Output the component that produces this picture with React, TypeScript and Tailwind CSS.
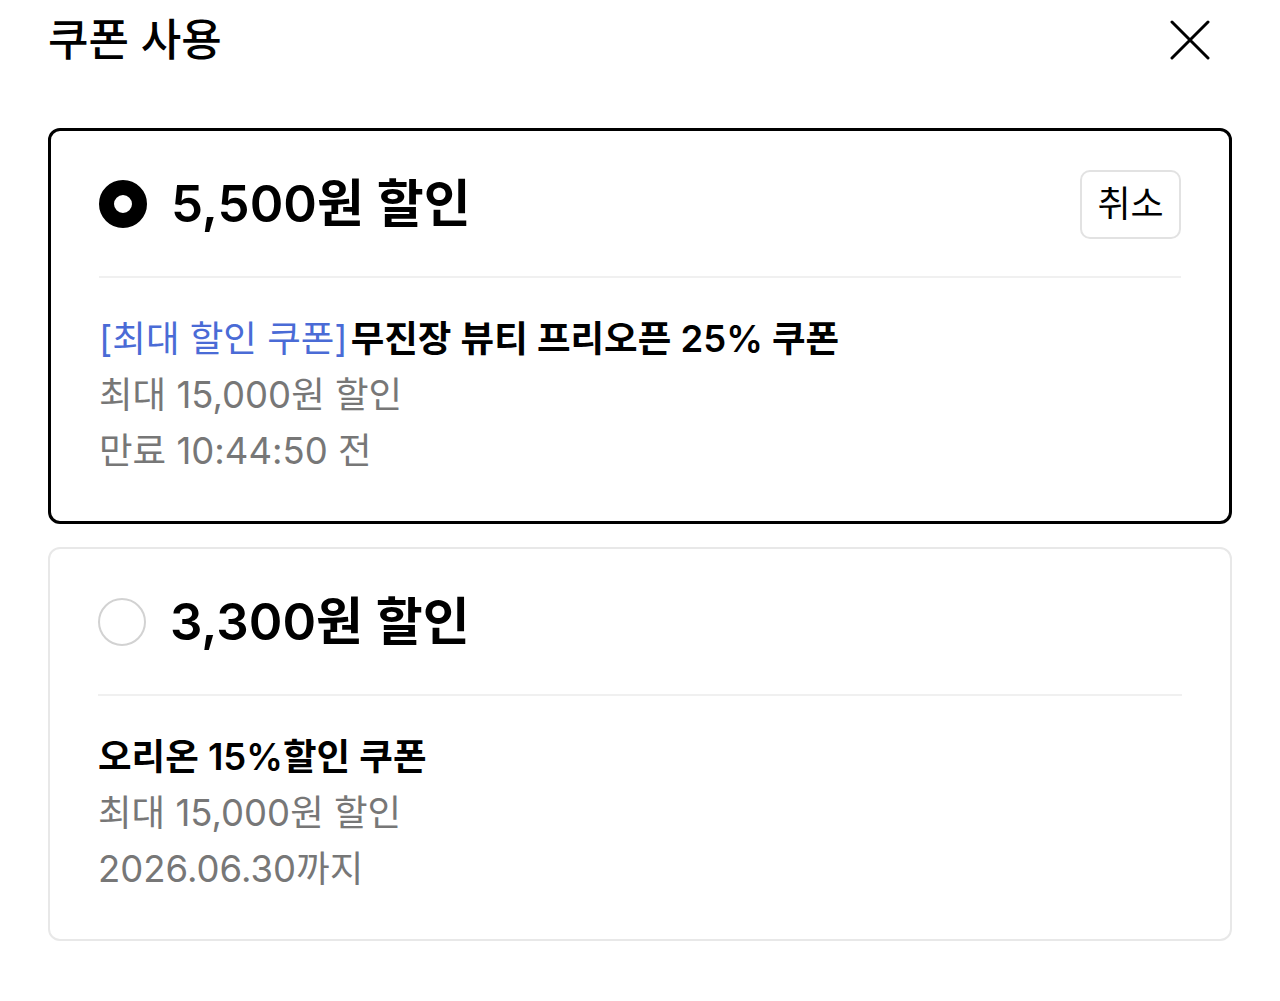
interface Coupon {
  amount: string;
  tag?: string;
  name: string;
  limit: string;
  expiry: string;
  selected: boolean;
}

const COUPONS: Coupon[] = [
  {
    amount: '5,500원 할인',
    tag: '[최대 할인 쿠폰]',
    name: '무진장 뷰티 프리오픈 25% 쿠폰',
    limit: '최대 15,000원 할인',
    expiry: '만료 10:44:50 전',
    selected: true,
  },
  {
    amount: '3,300원 할인',
    name: '오리온 15%할인 쿠폰',
    limit: '최대 15,000원 할인',
    expiry: '2026.06.30까지',
    selected: false,
  },
];

function Radio({ checked }: { checked: boolean }) {
  return checked ? (
    <span className="block w-12 h-12 rounded-full border-[15px] border-black bg-white flex-shrink-0" />
  ) : (
    <span className="block w-12 h-12 rounded-full border-2 border-[#d2d2d2] bg-white flex-shrink-0" />
  );
}

function CouponCard({ coupon }: { coupon: Coupon }) {
  return (
    <div
      className={`rounded-xl px-12 pt-[38px] pb-[42px] ${
        coupon.selected ? 'border-[3px] border-black' : 'border-2 border-[#e8e8e8]'
      }`}
    >
      {/* Amount row */}
      <div className="flex items-center h-[70px]">
        <Radio checked={coupon.selected} />
        <span className="ml-6 flex-1 text-[51px] font-semibold text-black">
          {coupon.amount}
        </span>
        {coupon.selected && (
          <button className="w-[101px] h-[69px] rounded-[10px] border-2 border-[#e2e2e2] text-[36px] text-black">
            취소
          </button>
        )}
      </div>

      <div className="h-[2px] bg-[#f0f0f0] mt-[37px] mb-[33px]" />

      {/* Details */}
      <div className="text-[36.5px] leading-[56px]">
        <p className="font-semibold text-black">
          {coupon.tag && (
            <span className="font-normal text-[#4a6bd6] mr-[3px]">{coupon.tag}</span>
          )}
          {coupon.name}
        </p>
        <p className="text-[#777777]">{coupon.limit}</p>
        <p className="text-[#777777]">{coupon.expiry}</p>
      </div>
    </div>
  );
}

export default function App() {
  return (
    <div
      className="w-[1280px] h-[1001px] bg-white px-12"
      style={{ fontFamily: 'Inter, "Noto Sans CJK KR", sans-serif' }}
    >
      {/* Header */}
      <div className="flex items-center justify-between h-20 pr-[22px]">
        <h1 className="text-[44px] font-medium text-black">쿠폰 사용</h1>
        <button aria-label="닫기" className="text-black">
          <svg width="40" height="40" viewBox="0 0 40 40" fill="none" stroke="currentColor" strokeWidth="3" strokeLinecap="round">
            <path d="M2 2L38 38M38 2L2 38" />
          </svg>
        </button>
      </div>

      <div className="mt-12 flex flex-col gap-[23px]">
        {COUPONS.map((c) => (
          <CouponCard key={c.amount} coupon={c} />
        ))}
      </div>
    </div>
  );
}
